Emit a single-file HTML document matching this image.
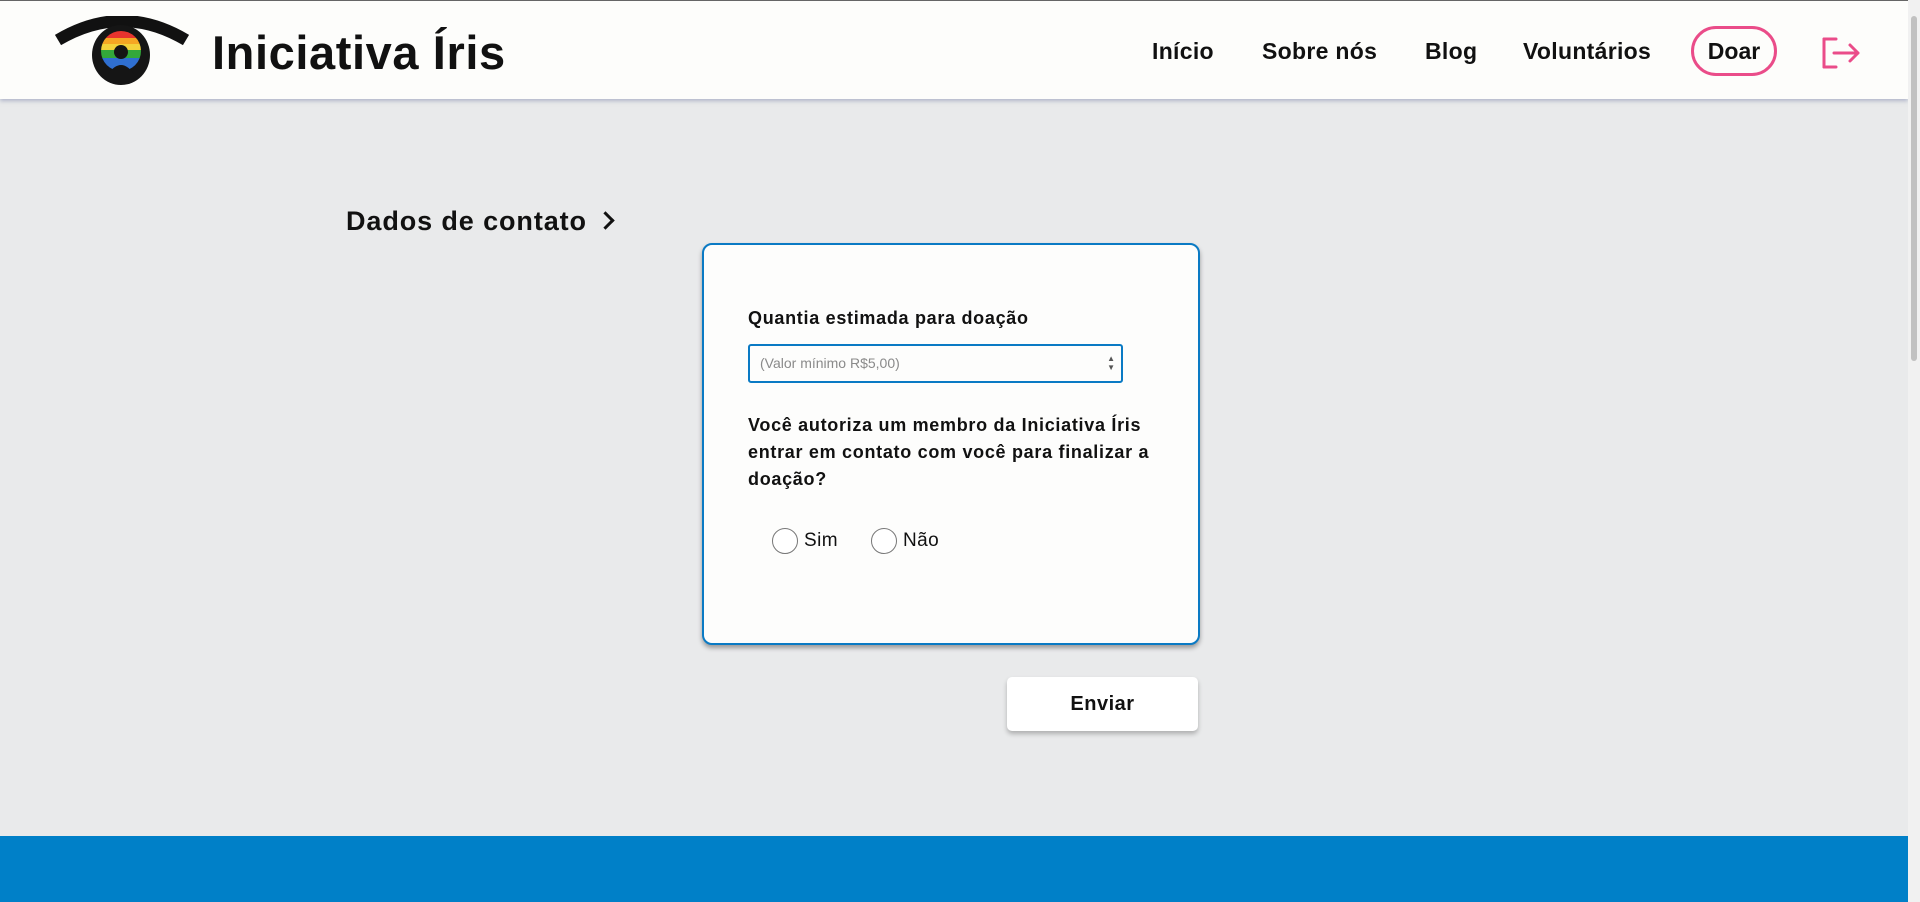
<!DOCTYPE html>
<html><head><meta charset="utf-8"><style>
*{margin:0;padding:0;box-sizing:border-box}
body{width:1920px;height:902px;overflow:hidden;background:#e9eaeb;font-family:"Liberation Sans",sans-serif;color:#111;position:relative}
.hdr{position:absolute;left:0;top:0;width:1908px;height:99px;background:#fdfdfb;box-shadow:0 2px 4px rgba(120,130,170,.5);border-top:1px solid #666}
.title{position:absolute;left:212px;top:24px;font-size:47px;font-weight:bold;letter-spacing:0.6px}
.nav{position:absolute;top:37px;font-size:23px;font-weight:bold;letter-spacing:0.3px}
.doar{position:absolute;left:1691px;top:25px;width:86px;height:50px;border:3px solid #ea4c89;border-radius:25px;font-size:23px;font-weight:bold;text-align:center;line-height:44px}
.sb{position:absolute;right:0;top:0;width:12px;height:902px;background:#f1f1f1}
.sb div{position:absolute;left:3px;top:16px;width:6px;height:345px;background:#c1c1c1;border-radius:3px}
.h2{position:absolute;left:346px;top:206px;font-size:27px;font-weight:bold;letter-spacing:0.9px}
.card{position:absolute;left:702px;top:243px;width:498px;height:402px;background:#fdfdfc;border:2px solid #0a7ac4;border-radius:10px;box-shadow:0 3px 5px rgba(0,0,0,.35)}
.lbl{position:absolute;left:44px;font-size:18px;font-weight:bold;line-height:27px;letter-spacing:0.7px}
.inp{position:absolute;left:44px;top:99px;width:375px;height:39px;border:2px solid #0a7ac4;border-radius:3px;font-size:14px;color:#8a8a8a;padding:9px 10px}
.radio{position:absolute;width:26px;height:26px;border:1.5px solid #777;border-radius:50%;background:#fff}
.rt{position:absolute;font-size:19px;letter-spacing:0.4px}
.btn{position:absolute;left:1007px;top:677px;width:191px;height:54px;background:#fff;border-radius:5px;box-shadow:0 3px 5px rgba(0,0,0,.25);text-align:center;line-height:54px;font-size:20px;font-weight:bold;letter-spacing:0.5px}
.foot{position:absolute;left:0;top:836px;width:1908px;height:66px;background:#0080c8}
</style></head><body>
<div class="hdr">
<svg style="position:absolute;left:52px;top:15px" width="140" height="70" viewBox="0 0 140 70">
<path d="M6 24 Q70 -14 134 24" stroke="#111" stroke-width="12" fill="none"/>
<ellipse cx="69" cy="39" rx="29" ry="30" fill="#151515"/>
<clipPath id="c"><circle cx="69" cy="35" r="20"/></clipPath>
<g clip-path="url(#c)">
<rect x="45" y="14" width="50" height="8" fill="#e8342e"/>
<rect x="45" y="22" width="50" height="6" fill="#f5a623"/>
<rect x="45" y="28" width="50" height="6" fill="#f3d23a"/>
<rect x="45" y="34" width="50" height="8" fill="#33a83a"/>
<rect x="45" y="42" width="50" height="14" fill="#2f6fd0"/>
</g>
<circle cx="69" cy="36" r="7" fill="#151515"/>
<path d="M56 58 Q69 40 82 58Z" fill="#151515"/>
</svg>
<div class="title">Iniciativa Íris</div>
<div class="nav" style="left:1152px">Início</div>
<div class="nav" style="left:1262px">Sobre nós</div>
<div class="nav" style="left:1425px">Blog</div>
<div class="nav" style="left:1523px">Voluntários</div>
<div class="doar">Doar</div>
<svg style="position:absolute;left:1820px;top:34px" width="42" height="36" viewBox="0 0 42 36" fill="none" stroke="#ea4c89" stroke-width="3" stroke-linecap="round" stroke-linejoin="round">
<path d="M16 4H4v28h12"/><path d="M4 4v28"/><path d="M14 18h24M30 10l8 8-8 8"/>
</svg>
</div>
<div class="h2">Dados de contato <span style="display:inline-block;width:13px;height:13px;border-right:3px solid #111;border-bottom:3px solid #111;transform:rotate(-45deg);margin-left:4px;position:relative;top:-3px"></span></div>
<div class="card">
<div class="lbl" style="top:60px">Quantia estimada para doação</div>
<div class="inp">(Valor mínimo R$5,00)<span style="position:absolute;right:6px;top:8px;font-size:8px;color:#555;line-height:9px">▲<br>▼</span></div>
<div class="lbl" style="top:167px;width:420px">Você autoriza um membro da Iniciativa Íris entrar em contato com você para finalizar a doação?</div>
<div class="radio" style="left:68px;top:283px"></div><div class="rt" style="left:100px;top:285px">Sim</div>
<div class="radio" style="left:167px;top:283px"></div><div class="rt" style="left:199px;top:285px">Não</div>
</div>
<div class="btn">Enviar</div>
<div class="foot"></div>
<div class="sb"><div></div></div>
</body></html>
